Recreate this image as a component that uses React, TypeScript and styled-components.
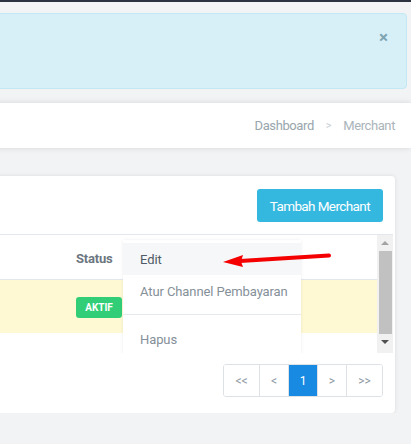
import React from "react";
import styled, { createGlobalStyle } from "styled-components";

const GlobalStyle = createGlobalStyle`
  html, body {
    margin: 0;
    padding: 0;
    background: #f2f3f5;
    font-family: Roboto, "Liberation Sans", sans-serif;
    overflow: hidden;
  }
  #root {
    position: relative;
  }
`;

// ----------------------------------------------------------------------
// Page frame
// ----------------------------------------------------------------------

const TopBar = styled.div`
  height: 2px;
  background: #2b3240;
`;

const Page = styled.div`
  width: calc(100% + 10px);
  margin-left: -10px;
  padding-top: 11px;
  box-sizing: border-box;
`;

const Alert = styled.div`
  position: relative;
  height: 76px;
  box-sizing: border-box;
  margin-right: 4px;
  background: #d7f0f8;
  border: 1px solid #c3e7f3;
  border-radius: 4px;
`;

const CloseButton = styled.span`
  position: absolute;
  top: 15px;
  right: 18px;
  font-size: 17px;
  font-weight: 700;
  line-height: 1;
  color: #7fa5b3;
`;

const BreadcrumbBar = styled.div`
  margin-top: 14px;
  height: 45px;
  background: #fff;
  box-shadow: 0 0 6px rgba(0, 0, 0, 0.12);
  display: flex;
  align-items: center;
  justify-content: flex-end;
  padding-right: 16px;
  font-size: 13px;
  letter-spacing: -0.4px;
`;

const Crumb = styled.span<{ $active?: boolean }>`
  color: ${({ $active }) => ($active ? "#aab4ba" : "#98a6ad")};
`;

const CrumbSep = styled.span`
  color: #c6cdd2;
  font-size: 11px;
  margin: 0 12px;
`;

// ----------------------------------------------------------------------
// Card
// ----------------------------------------------------------------------

const Card = styled.div`
  margin: 28px 16px 0 0;
  background: #fff;
  border-radius: 4px;
  box-shadow: 0 0 4px rgba(0, 0, 0, 0.1);
`;

const CardHeader = styled.div`
  display: flex;
  justify-content: flex-end;
  padding: 13px 12px 12px;
`;

const PrimaryButton = styled.button`
  height: 33px;
  padding: 0 13px;
  border: none;
  border-radius: 3px;
  background: #35b8e0;
  color: #fff;
  font-family: inherit;
  font-size: 13.5px;
  letter-spacing: -0.6px;
`;

const TableScroll = styled.div`
  display: flex;
  height: 118px;
  margin-right: 2px;
  border-top: 1px solid #e3e6ea;
`;

const TableViewport = styled.div`
  position: relative;
  flex: 1;
  overflow: hidden;
`;

const ScrollTrack = styled.div`
  width: 16px;
  flex: none;
  display: flex;
  flex-direction: column;
  align-items: center;
  background: #f1f1f1;
`;

const ScrollArrow = styled.div<{ $down?: boolean }>`
  height: 16px;
  width: 100%;
  display: flex;
  align-items: center;
  justify-content: center;
  &::before {
    content: "";
    border-left: 4px solid transparent;
    border-right: 4px solid transparent;
    ${({ $down }) =>
      $down ? "border-top: 4px solid #505050;" : "border-bottom: 4px solid #a3a3a3;"}
  }
`;

const ScrollThumb = styled.div`
  width: 13px;
  height: 83px;
  background: #c1c1c1;
`;

const TableBody = styled.div`
  min-height: 125px;
`;

const Row = styled.div<{ $highlight?: boolean; $height: number }>`
  display: flex;
  align-items: center;
  height: ${({ $height }) => $height}px;
  box-sizing: border-box;
  background: ${({ $highlight }) => ($highlight ? "#fef9d2" : "#fff")};
  border-bottom: ${({ $highlight }) => ($highlight ? "none" : "1px solid #e3e6ea")};
`;

const Cell = styled.div<{ $width: number }>`
  width: ${({ $width }) => $width}px;
  flex: none;
`;

const HeadText = styled.span`
  font-size: 13px;
  font-weight: 700;
  color: #6c7680;
  letter-spacing: -0.2px;
`;

const Badge = styled.span`
  display: inline-flex;
  align-items: center;
  justify-content: center;
  width: 46px;
  height: 21px;
  margin-top: 1px;
  border-radius: 3px;
  background: #31ce77;
  color: #fff;
  font-size: 10px;
  font-weight: 700;
`;

// ----------------------------------------------------------------------
// Dropdown
// ----------------------------------------------------------------------

const Menu = styled.div`
  position: absolute;
  top: 5px;
  left: 133px;
  width: 178px;
  padding: 3px 0;
  background: #fff;
  box-shadow: 0 0 3px rgba(0, 0, 0, 0.08);
`;

const MenuItem = styled.div<{ $active?: boolean }>`
  height: 32px;
  display: flex;
  align-items: center;
  padding-left: 17px;
  font-size: 13px;
  letter-spacing: -0.1px;
  background: ${({ $active }) => ($active ? "#f6f7f9" : "transparent")};
  color: ${({ $active }) => ($active ? "#4f5a66" : "#858f99")};
`;

const MenuDivider = styled.div`
  height: 1px;
  margin: 7px 0 8px;
  background: #e6e9ec;
`;

// ----------------------------------------------------------------------
// Pagination
// ----------------------------------------------------------------------

const CardFooter = styled.div`
  display: flex;
  justify-content: flex-end;
  padding: 11px 12px 16px;
`;

const Pager = styled.div`
  display: flex;
  height: 33px;
  border: 1px solid #dee2e6;
  border-radius: 3px;
  box-sizing: border-box;
  overflow: hidden;
`;

const PageLink = styled.span<{ $active?: boolean; $width: number }>`
  width: ${({ $width }) => $width}px;
  display: flex;
  align-items: center;
  justify-content: center;
  font-size: 12px;
  color: ${({ $active }) => ($active ? "#fff" : "#8e99a3")};
  background: ${({ $active }) => ($active ? "#188ae2" : "#fff")};
  & + & {
    border-left: 1px solid #dee2e6;
  }
`;

const Annotation = styled.svg`
  position: absolute;
  left: 0;
  top: 0;
  pointer-events: none;
`;

const pages = [
  { label: "<<", width: 35 },
  { label: "<", width: 28 },
  { label: "1", width: 28, active: true },
  { label: ">", width: 28 },
  { label: ">>", width: 35 },
];

export default function App() {
  return (
    <>
      <GlobalStyle />
      <TopBar />
      <Page>
        <Alert>
          <CloseButton>×</CloseButton>
        </Alert>
        <BreadcrumbBar>
          <Crumb>Dashboard</Crumb>
          <CrumbSep>&gt;</CrumbSep>
          <Crumb $active>Merchant</Crumb>
        </BreadcrumbBar>
        <Card>
          <CardHeader>
            <PrimaryButton>Tambah Merchant</PrimaryButton>
          </CardHeader>
          <TableScroll>
            <TableViewport>
              <TableBody>
                <Row $height={45}>
                  <Cell $width={86} />
                  <Cell $width={60}>
                    <HeadText>Status</HeadText>
                  </Cell>
                </Row>
                <Row $highlight $height={53}>
                  <Cell $width={86} />
                  <Cell $width={60}>
                    <Badge>AKTIF</Badge>
                  </Cell>
                </Row>
              </TableBody>
              <Menu>
                <MenuItem $active>Edit</MenuItem>
                <MenuItem>Atur Channel Pembayaran</MenuItem>
                <MenuDivider />
                <MenuItem>Hapus</MenuItem>
              </Menu>
            </TableViewport>
            <ScrollTrack>
              <ScrollArrow />
              <ScrollThumb />
              <ScrollArrow $down />
            </ScrollTrack>
          </TableScroll>
          <CardFooter>
            <Pager>
              {pages.map((p) => (
                <PageLink key={p.label} $active={p.active} $width={p.width}>
                  {p.label}
                </PageLink>
              ))}
            </Pager>
          </CardFooter>
        </Card>
      </Page>
      <Annotation width="411" height="444" viewBox="0 0 411 444">
        <line x1="329" y1="255.5" x2="240" y2="261" stroke="#f40000" strokeWidth="4" strokeLinecap="round" />
        <polygon points="223,262 243,255 241,261.5 243,267" fill="#f40000" />
      </Annotation>
    </>
  );
}
